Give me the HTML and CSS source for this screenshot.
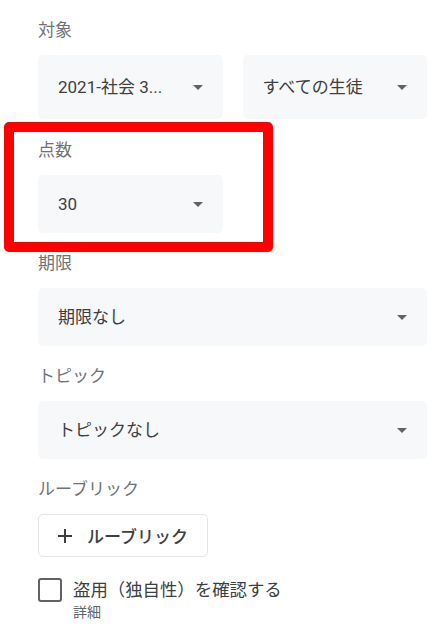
FILE: index.html
```html
<!DOCTYPE html>
<html lang="ja">
<head>
<meta charset="utf-8">
<title>課題の設定</title>
<link rel="stylesheet" href="styles.css">
</head>
<body>
<div class="form">
  <section class="field field-first">
    <div class="label">対象</div>
    <div class="row">
      <div class="select tall">
        <span class="value">2021-社会 3...</span>
        <svg class="arrow" viewBox="0 0 10 5" width="10" height="5"><path d="M0 0h10L5 5z"/></svg>
      </div>
      <div class="select tall">
        <span class="value">すべての生徒</span>
        <svg class="arrow" viewBox="0 0 10 5" width="10" height="5"><path d="M0 0h10L5 5z"/></svg>
      </div>
    </div>
  </section>

  <section class="field">
    <div class="label">点数</div>
    <div class="select half">
      <span class="value">30</span>
      <svg class="arrow" viewBox="0 0 10 5" width="10" height="5"><path d="M0 0h10L5 5z"/></svg>
    </div>
  </section>

  <section class="field">
    <div class="label">期限</div>
    <div class="select">
      <span class="value">期限なし</span>
      <svg class="arrow" viewBox="0 0 10 5" width="10" height="5"><path d="M0 0h10L5 5z"/></svg>
    </div>
  </section>

  <section class="field">
    <div class="label">トピック</div>
    <div class="select">
      <span class="value">トピックなし</span>
      <svg class="arrow" viewBox="0 0 10 5" width="10" height="5"><path d="M0 0h10L5 5z"/></svg>
    </div>
  </section>

  <section class="field">
    <div class="label">ルーブリック</div>
    <button class="add-btn" type="button">
      <svg class="plus" viewBox="0 0 14 14" width="14" height="14"><path d="M6 0h2v6h6v2H8v6H6V8H0V6h6z"/></svg>
      <span>ルーブリック</span>
    </button>
  </section>

  <div class="check-row">
    <span class="checkbox"></span>
    <div class="check-text">
      <div class="check-label">盗用（独自性）を確認する</div>
      <div class="check-sub">詳細</div>
    </div>
  </div>
</div>
<div class="highlight"></div>
</body>
</html>
```

FILE: styles.css
```css
* {
  box-sizing: border-box;
}

html, body {
  margin: 0;
  background: #ffffff;
}

body {
  position: relative;
  width: 443px;
  min-height: 641px;
  padding: 18px 16px 0 38px;
  font-family: Roboto, "Noto Sans CJK JP", sans-serif;
  color: #3c4043;
}

.form {
  display: flex;
  flex-direction: column;
  gap: 18px;
}

.field {
  display: flex;
  flex-direction: column;
}

.field-first {
  margin-bottom: 1px;
}

.label {
  font-size: 17px;
  line-height: 24px;
  color: #6f7377;
  margin-bottom: 13px;
}

.row {
  display: grid;
  grid-template-columns: 1fr 1fr;
  gap: 20px;
}

.select {
  display: flex;
  align-items: center;
  justify-content: space-between;
  height: 58px;
  padding: 0 20px 0 20px;
  background: #f7f8fa;
  border-radius: 5px;
}

.select.tall {
  height: 64px;
}

.select.half {
  width: 185px;
}

.value {
  font-size: 17px;
  line-height: 24px;
  color: #3c4043;
  white-space: nowrap;
}

.arrow {
  flex: none;
  fill: #5f6368;
}

.add-btn {
  display: flex;
  align-items: center;
  align-self: flex-start;
  width: 170px;
  height: 43px;
  padding: 0 0 0 19px;
  gap: 15px;
  background: #ffffff;
  border: 1px solid #e3e5e8;
  border-radius: 5px;
  font-family: Roboto, "Noto Sans CJK JP", sans-serif;
  font-size: 17px;
  font-weight: 500;
  color: #3c4043;
}

.plus {
  fill: #3c4043;
  flex: none;
}

.check-row {
  display: flex;
  align-items: flex-start;
  gap: 11px;
  margin-top: 3px;
}

.checkbox {
  flex: none;
  width: 24px;
  height: 24px;
  border: 2.5px solid #5f6368;
  border-radius: 3px;
}

.check-text {
  display: flex;
  flex-direction: column;
}

.check-label {
  font-size: 17.4px;
  line-height: 24px;
  color: #3c4043;
}

.check-sub {
  font-size: 14px;
  line-height: 20px;
  color: #5f6368;
}

.highlight {
  position: absolute;
  left: 4px;
  top: 122px;
  width: 269px;
  height: 130px;
  border: 10px solid #ff0000;
  border-radius: 5px;
  pointer-events: none;
}
```
